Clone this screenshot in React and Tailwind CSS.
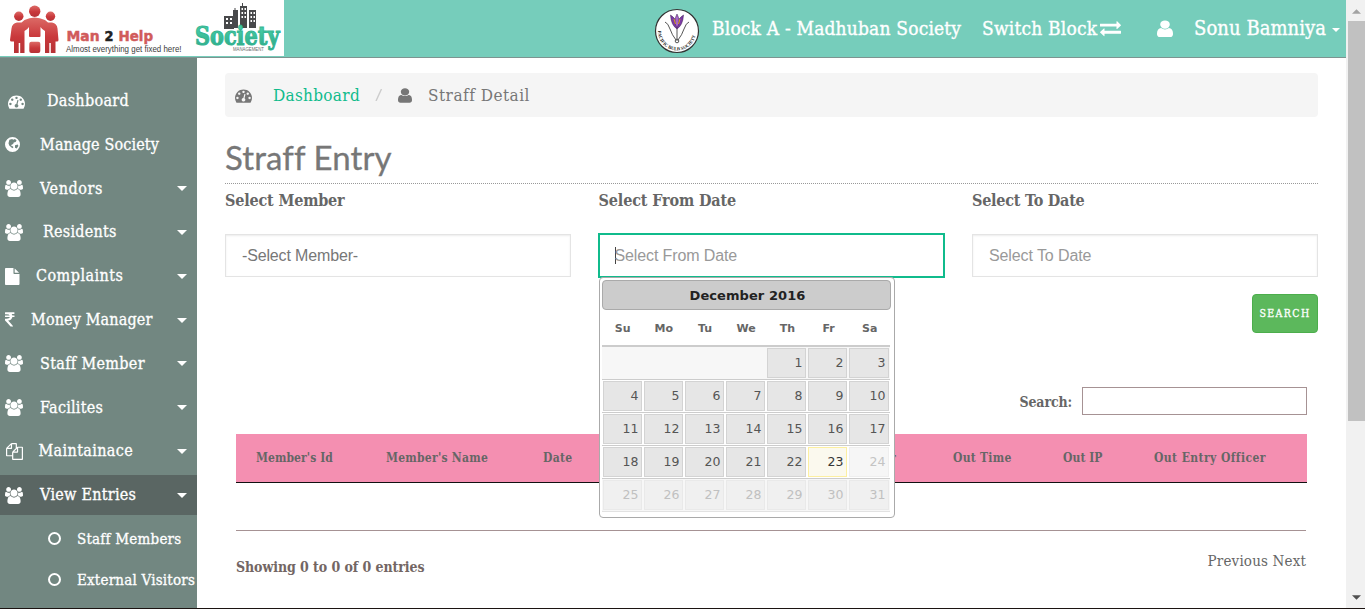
const SERIF = "font-['DejaVu_Serif_Condensed','DejaVu_Serif',serif]";

const PATHS = {
  tachometer: "M384 1152q0-53-37.5-90.5t-90.5-37.5-90.5 37.5-37.5 90.5 37.5 90.5 90.5 37.5 90.5-37.5 37.5-90.5zm192-448q0-53-37.5-90.5t-90.5-37.5-90.5 37.5-37.5 90.5 37.5 90.5 90.5 37.5 90.5-37.5 37.5-90.5zm428 481l101-382q6-26-7.5-48.5t-38.5-29.5-48 6.5-30 39.5l-101 382q-60 5-107 43.5t-63 98.5q-20 77 20 146t117 89 146-20 89-117q16-60-6-117t-72-91zm660-33q0-53-37.5-90.5t-90.5-37.5-90.5 37.5-37.5 90.5 37.5 90.5 90.5 37.5 90.5-37.5 37.5-90.5zm-640-640q0-53-37.5-90.5t-90.5-37.5-90.5 37.5-37.5 90.5 37.5 90.5 90.5 37.5 90.5-37.5 37.5-90.5zm448 192q0-53-37.5-90.5t-90.5-37.5-90.5 37.5-37.5 90.5 37.5 90.5 90.5 37.5 90.5-37.5 37.5-90.5zm320 448q0 261-141 483-19 29-54 29h-1402q-35 0-54-29-141-221-141-483 0-182 71-348t191-286 286-191 348-71 348 71 286 191 191 286 71 348z",
  user: "M1536 1399q0 109-62.5 187t-150.5 78h-854q-88 0-150.5-78t-62.5-187q0-85 8.5-160.5t31.5-152 58.5-131 94-89 134.5-34.5q131 128 313 128t313-128q76 0 134.5 34.5t94 89 58.5 131 31.5 152 8.5 160.5zm-256-887q0 159-112.5 271.5t-271.5 112.5-271.5-112.5-112.5-271.5 112.5-271.5 271.5-112.5 271.5 112.5 112.5 271.5z",
  users: "M593 896q-162 5-265 128h-134q-82 0-138-40.5t-56-118.5q0-353 124-353 6 0 43.5 21t97.5 42.5 119 21.5q67 0 133-23-5 37-5 66 0 139 81 256zm1071 637q0 120-73 189.5t-194 69.5h-874q-121 0-194-69.5t-73-189.5q0-53 3.5-103.5t14-109 26.5-108.5 43-97.5 62-81 85.5-53.5 111.5-20q10 0 43 21.5t73 48 107 48 135 21.5 135-21.5 107-48 73-48 43-21.5q61 0 111.5 20t85.5 53.5 62 81 43 97.5 26.5 108.5 14 109 3.5 103.5zm-1024-1277q0 106-75 181t-181 75-181-75-75-181 75-181 181-75 181 75 75 181zm704 384q0 159-112.5 271.5t-271.5 112.5-271.5-112.5-112.5-271.5 112.5-271.5 271.5-112.5 271.5 112.5 112.5 271.5zm576 225q0 78-56 118.5t-138 40.5h-134q-103-123-265-128 81-117 81-256 0-29-5-66 66 23 133 23 59 0 119-21.5t97.5-42.5 43.5-21q124 0 124 353zm-128-609q0 106-75 181t-181 75-181-75-75-181 75-181 181-75 181 75 75 181z",
  exchange: "M1792 1184v192q0 13-9.5 22.5t-22.5 9.5h-1376v192q0 13-9.5 22.5t-22.5 9.5q-12 0-24-10l-319-320q-9-9-9-22 0-14 9-23l320-320q9-9 23-9 13 0 22.5 9.5t9.5 22.5v192h1376q13 0 22.5 9.5t9.5 22.5zm0-544q0 14-9 23l-320 320q-9 9-23 9-13 0-22.5-9.5t-9.5-22.5v-192h-1376q-13 0-22.5-9.5t-9.5-22.5v-192q0-13 9.5-22.5t22.5-9.5h1376v-192q0-14 9-23t23-9q12 0 24 10l319 319q9 9 9 23z",
  file: "M1152 512v-472q22 14 36 28l408 408q14 14 28 36h-472zm-128 32q0 40 28 68t68 28h544v1056q0 40-28 68t-68 28h-1344q-40 0-68-28t-28-68v-1600q0-40 28-68t68-28h800v544z",
  files: "M1696 384q40 0 68 28t28 68v1216q0 40-28 68t-68 28h-960q-40 0-68-28t-28-68v-288h-544q-40 0-68-28t-28-68v-672q0-40 20-88t48-76l408-408q28-28 76-48t88-20h416q40 0 68 28t28 68v328q68-40 128-40h416zm-544 213l-299 299h299v-299zm-640-384l-299 299h299v-299zm196 647l316-316v-416h-384v416q0 40-28 68t-68 28h-416v640h512v-256q0-40 20-88t48-76zm956 804v-1152h-384v416q0 40-28 68t-68 28h-416v640h896z",
  rupee: "M1345 470v102q0 14-9 23t-23 9h-168q-23 144-129 234t-276 110q167 178 459 536 14 16 4 34-8 18-29 18h-195q-16 0-25-12-306-367-498-571-9-9-9-22v-127q0-13 9.5-22.5t22.5-9.5h112q132 0 212.5-43t102.5-125h-427q-14 0-23-9t-9-23v-102q0-14 9-23t23-9h413q-57-113-268-113h-145q-13 0-22.5-9.5t-9.5-22.5v-133q0-14 9-23t23-9h832q14 0 23 9t9 23v102q0 14-9 23t-23 9h-233q47 61 64 144h171q14 0 23 9t9 23z",
};

const BOXES = {
  tachometer: "0 0 1792 1792",
  user: "256 0 1280 1792",
  users: "0 0 1920 1792",
  exchange: "0 0 1792 1792",
  file: "128 0 1536 1792",
  files: "0 0 1792 1792",
  rupee: "448 0 898 1792",
};

function Icon({ name, className = "" }) {
  if (name === "globe") {
    return (
      <svg viewBox="0 0 24 24" className={className}>
        <path
          fill="currentColor"
          fillRule="evenodd"
          d="M12 0a12 12 0 1 0 0 24a12 12 0 1 0 0-24zM7 4.200l4.500-1.200 1.500 1.500 3-1.200 2.500 2.200-1.500 2.500-3 .6-1 2.400-2.500 1.200-.6 2 2.600.6 1 1.500-1.800 1.600-2.200-2.100-2.700-2.200-1.200-3.800zM16 13l4.500-1 .9 2.500-2.700 4-2.700-1.500z"
        />
      </svg>
    );
  }
  return (
    <svg viewBox={BOXES[name]} preserveAspectRatio="none" fill="currentColor" className={className}>
      <path d={PATHS[name]} />
    </svg>
  );
}

function Caret({ className = "" }) {
  return (
    <svg viewBox="0 0 10 5" fill="currentColor" className={className}>
      <path d="M0 0h10L5 5z" />
    </svg>
  );
}

function ManToHelpLogo() {
  return (
    <svg width="190" height="56" viewBox="0 0 190 56" className="shrink-0">
      <defs>
        <linearGradient id="red" x1="0" y1="0" x2="0" y2="1">
          <stop offset="0" stopColor="#dc6a66" />
          <stop offset="0.55" stopColor="#c9383b" />
          <stop offset="1" stopColor="#b53236" />
        </linearGradient>
      </defs>
      <g fill="url(#red)">
        <circle cx="34.700" cy="11.300" r="5.700" />
        <circle cx="18.800" cy="16.300" r="4.700" />
        <circle cx="50.500" cy="16.300" r="4.700" />
        <path d="M24.500 20q10-5 20.500 0l3 2.500h4q5 1 5.500 6L58.500 40q0 1.500-1.500 1.500h-1.500V53H50.800V43h-1.500v10H45V31q-3-1.500-4.500-4V36q0 1-1 1h-9.500q-1 0-1-1v-9q-1.500 2.500-4.500 4v22h-4.300V43h-1.500v10H14V41.500h-2.500Q10 41.500 10 40l1.500-11.500q.5-5 5.500-6h4.500z" />
        <rect x="29.300" y="41.800" width="11" height="11.200" rx="2" />
      </g>
      <g className="font-['DejaVu_Sans'] font-bold" fontSize="14.500">
        <text x="66.500" y="40.500" fill="#d15b5b" stroke="#d15b5b" strokeWidth="0.500" textLength="33" lengthAdjust="spacingAndGlyphs">Man</text>
        <text x="104.500" y="40.500" fill="#222" stroke="#222" strokeWidth="0.500" textLength="9" lengthAdjust="spacingAndGlyphs">2</text>
        <text x="118.500" y="40.500" fill="#d15b5b" stroke="#d15b5b" strokeWidth="0.500" textLength="34.500" lengthAdjust="spacingAndGlyphs">Help</text>
      </g>
      <text x="66" y="52.300" fontSize="8.500" fill="#3c3c3c" className="font-['Liberation_Sans']" textLength="115.500" lengthAdjust="spacingAndGlyphs">
        Almost everything get fixed here!
      </text>
    </svg>
  );
}

function SocietyLogo() {
  return (
    <svg width="94" height="56" viewBox="190 0 94 56" className="shrink-0">
      <defs>
        <linearGradient id="teal" x1="0" y1="0" x2="0" y2="1">
          <stop offset="0.300" stopColor="#43cba4" />
          <stop offset="1" stopColor="#2ba384" />
        </linearGradient>
      </defs>
      <g fill="#48494b">
        <path d="M224 16h10v13h-10zM233 10h1.500v-2h1v2h2.500v18h-5zM241 6h1v-3h1v3h4v22h-7V6zM249 10h7v18h-7z" />
      </g>
      <g fill="#fff">
        <path d="M226 18h2v2h-2zM230 18h2v2h-2zM226 22h2v2h-2zM230 22h2v2h-2zM241.500 8h1.500v2h-1.500zM244.500 8h1.500v2h-1.500zM241.500 12h1.500v2h-1.500zM244.500 12h1.500v2h-1.500zM241.500 16h1.500v2h-1.500zM244.500 16h1.500v2h-1.500zM250.500 12h1.500v2h-1.500zM253.500 12h1.500v2h-1.500zM250.500 16h1.500v2h-1.500zM253.500 16h1.500v2h-1.500zM250.500 20h1.500v2h-1.500zM253.500 20h1.500v2h-1.500z" />
      </g>
      <text x="195" y="44.500" fontSize="26" fill="url(#teal)" stroke="#35b592" strokeWidth="1.100" className="font-['DejaVu_Serif'] font-bold" textLength="84.500" lengthAdjust="spacingAndGlyphs">
        Society
      </text>
      <text x="233" y="51" fontSize="5" fill="#6b6b6b" className="font-['Liberation_Sans']" textLength="31" lengthAdjust="spacingAndGlyphs">
        MANAGEMENT
      </text>
    </svg>
  );
}

function BulbSocietyBadge() {
  return (
    <svg width="46" height="46" viewBox="0 0 46 46" className="shrink-0">
      <defs>
        <path id="ring" d="M4.500 19A19 19 0 1 0 41.500 19" />
      </defs>
      <circle cx="23" cy="23" r="21.500" fill="#fff" stroke="#333" strokeWidth="1.200" />
      <g fill="none" stroke="#555" strokeWidth="1">
        <path d="M11 14q3 1 5 7t6 11M35 14q-3 1-5 7t-6 11M23 19v14" />
        <circle cx="23" cy="33" r="1.800" />
      </g>
      <g fill="#7d3aa5" stroke="#3d2050" strokeWidth="0.500">
        <path d="M23 21q-6-4-6.500-14 4 2 6.500 8 2.500-6 6.500-8-.5 10-6.500 14z" />
        <path d="M23 20q-4-7 0-14 4 7 0 14z" fill="#a964c8" />
      </g>
      <path d="M20 11l1.500 5M26 11l-1.500 5" stroke="#d9a31c" strokeWidth="1" />
      <text fontSize="4.700" fill="#222" className="font-['Liberation_Serif'] font-bold">
        <textPath href="#ring" startOffset="4">PACIFIC BULB SOCIETY</textPath>
      </text>
    </svg>
  );
}

function Header() {
  return (
    <header className="flex h-[58px] shrink-0 border-b border-[#7d9490] bg-[#76cdbb] text-white">
      <div className="flex h-14 w-[284px] shrink-0 bg-white">
        <ManToHelpLogo />
        <SocietyLogo />
      </div>
      <div className={`flex h-14 flex-1 items-center pl-[370px] whitespace-nowrap [-webkit-text-stroke:0.35px] ${SERIF}`}>
        <span className="mt-[5px] flex [-webkit-text-stroke:0]"><BulbSocietyBadge /></span>
        <span className="ml-3 w-[270px] text-[19px] tracking-[0.18px]">Block A - Madhuban Society</span>
        <span className="flex w-[175px] items-center gap-[3px] text-[19px] tracking-[0.2px]">
          Switch Block
          <Icon name="exchange" className="h-5 w-[21px]" />
        </span>
        <Icon name="user" className="mt-0.5 h-[19.500px] w-4" />
        <span className="ml-[21px] w-[138px] text-[20px] tracking-[0.07px]">Sonu Bamniya</span>
        <Caret className="mt-[3px] h-1 w-2" />
      </div>
    </header>
  );
}

const MENU = [
  { label: "Dashboard", icon: "tachometer", iconBox: "ml-2 w-[39px]", size: "h-[17px] w-[17px]", tracking: "tracking-[0.29px]" },
  { label: "Manage Society", icon: "globe", iconBox: "ml-[5px] w-[35px]", size: "size-[15px]", tracking: "tracking-[0.14px]" },
  { label: "Vendors", icon: "users", iconBox: "ml-[5px] w-[35px]", size: "h-[17px] w-[18px]", tracking: "tracking-[0.59px]", caret: true },
  { label: "Residents", icon: "users", iconBox: "ml-[5px] w-[38px]", size: "h-[17px] w-[18px]", tracking: "tracking-[0.22px]", caret: true },
  { label: "Complaints", icon: "file", iconBox: "ml-[5px] w-[31px]", size: "h-[17px] w-[14.500px]", tracking: "tracking-[0.47px]", caret: true },
  { label: "Money Manager", icon: "rupee", iconBox: "ml-[5px] w-[26px]", size: "h-[18px] w-[9.500px]", tracking: "tracking-[0.14px]", caret: true },
  { label: "Staff Member", icon: "users", iconBox: "ml-[5px] w-[35px]", size: "h-[17px] w-[18px]", tracking: "tracking-[0.33px]", caret: true },
  { label: "Facilites", icon: "users", iconBox: "ml-[5px] w-[35px]", size: "h-[17px] w-[18px]", tracking: "tracking-[0.22px]", caret: true },
  { label: "Maintainace", icon: "files", iconBox: "ml-[5.5px] w-[33px]", size: "size-[17px]", tracking: "tracking-[0.36px]", caret: true },
  { label: "View Entries", icon: "users", iconBox: "ml-[5px] w-[35px]", size: "h-[17px] w-[18px]", tracking: "tracking-[0.26px]", caret: true, active: true },
];

function Sidebar() {
  return (
    <aside className={`flex w-[197px] shrink-0 flex-col overflow-hidden bg-[#728781] pt-[23.200px] whitespace-nowrap text-white [-webkit-text-stroke:0.3px] ${SERIF}`}>
      <nav className="flex flex-col gap-[3.780px]">
        {MENU.map((m) => (
          <a key={m.label} className={`flex h-10 items-center text-base ${m.active ? "bg-[#5a6663]" : ""}`}>
            <span className={`flex shrink-0 ${m.iconBox}`}>
              <Icon name={m.icon} className={m.size} />
            </span>
            <span className={`flex-1 ${m.tracking}`}>{m.label}</span>
            {m.caret && <Caret className="mr-[10.500px] h-[5px] w-[10px]" />}
          </a>
        ))}
      </nav>
      <div className="mt-[3.300px] flex flex-col pl-[47.500px] text-[15px]">
        {[
          ["Staff Members", "tracking-[0.22px]"],
          ["External Visitors", "tracking-[0.2px]"],
        ].map(([t, tr]) => (
          <a key={t} className="flex h-[41px] items-center">
            <span className="mr-[16.500px] size-[13px] shrink-0 rounded-full border-2 border-white" />
            <span className={tr}>{t}</span>
          </a>
        ))}
      </div>
    </aside>
  );
}

const WEEKS = [
  [null, null, null, null, 1, 2, 3],
  [4, 5, 6, 7, 8, 9, 10],
  [11, 12, 13, 14, 15, 16, 17],
  [18, 19, 20, 21, 22, 23, 24],
  [25, 26, 27, 28, 29, 30, 31],
];

function dayClass(d) {
  if (d === 23) return "border-[#fcefa1] bg-[#fbf9ee] text-[#363636]";
  if (d === 24) return "border-[#eeeeee] bg-[#f6f6f6] text-[#c4c4c4]";
  if (d > 24) return "border-[#e9e9e9] bg-[#f0f0f0] text-[#c0c0c0]";
  return "border-[#d3d3d3] bg-[#e6e6e6] text-[#555]";
}

function Calendar() {
  return (
    <div className="absolute top-11 left-px z-10 h-[241px] w-[296px] rounded border border-[#aaa] bg-white p-0.5 font-['DejaVu_Sans',sans-serif] tracking-normal">
      <div className="flex h-[30px] w-[289px] items-center justify-center rounded border border-[#aaa] bg-[#ccc] pt-px pl-0.5 text-[13px] font-bold tracking-[0.08px] text-[#222]">
        December 2016
      </div>
      <div className="flex h-[35px] w-[290px] items-center pt-[3px] text-[11px] font-bold text-[#666]">
        {["Su", "Mo", "Tu", "We", "Th", "Fr", "Sa"].map((d) => (
          <span key={d} className="w-[41.200px] shrink-0 text-center">{d}</span>
        ))}
      </div>
      <div className="w-[288px] border-t-2 border-[#ccc]">
        {WEEKS.map((w, i) => (
          <div
            key={i}
            className={`flex h-[33px] gap-0.5 border-b px-px pt-px ${i === 0 ? "bg-[#f7f7f7]" : ""} ${i === 4 ? "border-[#e2e2e2] bg-[#f7f7f7]" : "border-[#ccc]"}`}
          >
            {w.map((d, j) =>
              d === null ? (
                <span key={j} className="w-[39px]" />
              ) : (
                <span key={j} className={`flex h-[30px] items-center justify-end border pr-[2.500px] text-[12.500px] ${j === 6 ? "w-10" : "w-[39px]"} ${dayClass(d)}`}>
                  {d}
                </span>
              )
            )}
          </div>
        ))}
      </div>
    </div>
  );
}

function Field({ label, tracking, children }) {
  return (
    <div>
      <label className={`block h-[50px] pt-[5px] text-base leading-6 font-bold text-[#666] ${SERIF} ${tracking}`}>{label}</label>
      {children}
    </div>
  );
}

const BOX = "flex h-[43px] items-center border border-[#e4e4e4] px-4 font-['Liberation_Sans',sans-serif] text-base shadow-[inset_0_1px_2px_rgba(0,0,0,0.075)]";

const COLUMNS = [
  ["Member's Id", "w-[130px] tracking-[0.08px]"],
  ["Member's Name", "w-[157px] tracking-[0.26px]"],
  ["Date", "w-[251px] tracking-[0.32px]"],
  ["In Entry Officer", "w-[159px] tracking-[0.42px]"],
  ["Out Time", "w-[110px] tracking-[0.26px]"],
  ["Out IP", "w-[91px] tracking-[0.06px]"],
  ["Out Entry Officer", "tracking-[0.42px]"],
];

function Main() {
  return (
    <main className={`min-w-0 flex-1 bg-white pt-[15px] pr-7 pl-7 ${SERIF}`}>
      <div className="flex h-11 items-center rounded bg-[#f5f5f5] pl-2.5 text-[17px] text-[#777]">
        <Icon name="tachometer" className="size-[17px]" />
        <span className="ml-[21px] w-[102px] pt-0.5 tracking-[0.3px] text-[#10bb8c]">Dashboard</span>
        <svg viewBox="0 0 8 12" className="h-3 w-2" stroke="#ccc" strokeWidth="1.400">
          <path d="M1 12L6.500 0" />
        </svg>
        <Icon name="user" className="ml-[14.500px] h-[17px] w-[14px]" />
        <span className="ml-[16.500px] pt-0.5 tracking-[0.49px]">Straff Detail</span>
      </div>

      <h1 className="mt-5 h-[47px] border-b border-dotted border-[#999] font-['Lato',sans-serif] text-[33px] leading-10 tracking-[0.1px] text-[#777] [-webkit-text-stroke:0.3px]">
        Straff Entry
      </h1>

      <div className="grid grid-cols-3 gap-x-[27.500px]">
        <Field label="Select Member" tracking="tracking-[-0.17px]">
          <div className={`${BOX} tracking-[-0.15px] text-[#777]`}>-Select Member-</div>
        </Field>
        <Field label="Select From Date" tracking="tracking-[-0.13px]">
          <div className="relative -mt-px -mr-[0.500px] -ml-[0.500px] flex h-[45px] items-center border-2 border-[#10bb8c] pl-[14.500px] font-['Liberation_Sans',sans-serif] text-base tracking-[-0.12px] text-[#999]">
            <span className="-mr-px h-[17px] w-px bg-[#444]" />
            Select From Date
            <div className="absolute -top-0.5 -left-0.5"><Calendar /></div>
          </div>
        </Field>
        <Field label="Select To Date" tracking="tracking-[-0.23px]">
          <div className={`${BOX} tracking-[-0.1px] text-[#999]`}>Select To Date</div>
        </Field>
      </div>

      <div className="mt-4 flex justify-end">
        <button className="h-[39px] w-[66px] rounded border border-[#4cae4c] bg-[#5cb85c] text-[10.500px] tracking-[1.400px] text-white [-webkit-text-stroke:0.3px]">
          SEARCH
        </button>
      </div>

      <section className="mt-[54px] px-[11px]">
        <div className="flex items-center justify-end gap-2.5 text-[14px] font-bold tracking-[-0.13px] text-[#666]">
          <span className="pt-0.5">Search:</span>
          <span className="h-7 w-[225px] border border-[#a69294]" />
        </div>
        <div className="mt-[19px] flex h-[49px] items-center border-b border-[#111] bg-[#f48fb1] pl-5 text-xs font-bold whitespace-nowrap text-[#666]">
          {COLUMNS.map(([t, c]) => (
            <span key={t} className={`shrink-0 ${c}`}>{t}</span>
          ))}
        </div>
        <div className="mr-px h-12 border-b border-[#a69294]" />
        <div className="flex justify-between">
          <span className="pt-[26px] text-[14px] leading-5 font-bold tracking-[-0.07px] text-[#736664]">Showing 0 to 0 of 0 entries</span>
          <span className="pt-5 pr-px text-[15px] leading-5 tracking-[0.16px] text-[#666]">Previous Next</span>
        </div>
      </section>
    </main>
  );
}

function Scrollbar() {
  return (
    <div className="flex w-[19px] shrink-0 flex-col items-center bg-[#f1f1f1] pl-0.5">
      <Caret className="mt-[9px] h-[5px] w-[9px] rotate-180 text-[#a3a3a3]" />
      <div className="mt-[7px] h-[400px] w-[17px] bg-[#c1c1c1]" />
      <Caret className="mt-auto mb-[8px] h-[5px] w-[9px] text-[#505050]" />
    </div>
  );
}

export default function App() {
  return (
    <div className="flex h-[609px] w-[1365px] flex-col overflow-hidden bg-white">
      <div className="flex min-h-0 flex-1">
        <div className="flex min-w-0 flex-1 flex-col">
          <Header />
          <div className="flex min-h-0 flex-1">
            <Sidebar />
            <Main />
          </div>
        </div>
        <Scrollbar />
      </div>
      <div className="h-px shrink-0 bg-[#1c1412]" />
    </div>
  );
}
